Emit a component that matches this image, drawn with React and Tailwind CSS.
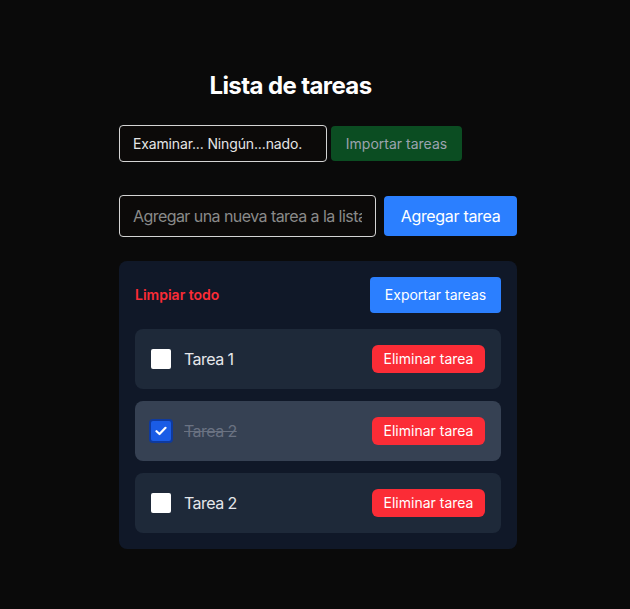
import { useState } from "react";

const tareasIniciales = [
  { id: 1, texto: "Tarea 1", hecha: false },
  { id: 2, texto: "Tarea 2", hecha: true },
  { id: 3, texto: "Tarea 2", hecha: false },
];

function Casilla({ marcada, onClick }) {
  if (marcada) {
    return (
      <button
        onClick={onClick}
        className="w-5 h-5 rounded-[2px] bg-[#1a5ce6] ring-2 ring-[#0f3a9e] flex items-center justify-center shrink-0"
      >
        <svg width="12" height="10" viewBox="0 0 12 10" fill="none">
          <path d="M1.5 5.2 L4.5 8 L10.5 1.8" stroke="white" strokeWidth="2.2" strokeLinecap="round" strokeLinejoin="round" />
        </svg>
      </button>
    );
  }
  return <button onClick={onClick} className="w-5 h-5 rounded-[2px] bg-white shrink-0" />;
}

export default function App() {
  const [tareas, setTareas] = useState(tareasIniciales);

  const toggle = (id) =>
    setTareas(tareas.map((t) => (t.id === id ? { ...t, hecha: !t.hecha } : t)));

  return (
    <div className="min-h-[609px] bg-[#0a0a0a] text-white font-['Inter',sans-serif] pt-[70px]">
      <div className="w-[398px] ml-[119px]">
        {/* Cabecera e importacion */}
        <div className="w-fit">
          <h1 className="text-2xl font-bold tracking-tight text-center text-white">Lista de tareas</h1>
          <div className="flex items-center gap-1 mt-[23px]">
            <div className="w-[208px] h-[37px] border border-[#d4d4d4] rounded bg-[#0c0a09] flex items-center px-[13px] text-sm tracking-[-0.01em] text-[#e5e5e5]">
              Examinar... Ningún...nado.
            </div>
            <button className="w-[131px] h-[35px] rounded bg-[#0b4d22] text-sm text-[#9ca3af]">
              Importar tareas
            </button>
          </div>
        </div>

        {/* Agregar tarea */}
        <div className="flex items-center gap-2 mt-[33px]">
          <input
            placeholder="Agregar una nueva tarea a la lista"
            className="w-[257px] h-[42px] border border-[#d4d4d4] rounded bg-[#0c0a09] px-[13px] text-base tracking-[-0.035em] placeholder:text-[#8a8a8a] outline-none"
          />
          <button className="w-[133px] h-10 rounded bg-[#2b7fff] text-base tracking-[-0.02em] text-white">Agregar tarea</button>
        </div>

        {/* Panel de tareas */}
        <div className="mt-6 bg-[#101828] rounded-lg p-4">
          <div className="flex items-center justify-between">
            <button className="text-sm font-semibold text-[#fb2c36]">Limpiar todo</button>
            <button className="w-[131px] h-9 rounded bg-[#2b7fff] text-sm text-white">Exportar tareas</button>
          </div>
          <ul className="mt-4 flex flex-col gap-3">
            {tareas.map((t) => (
              <li
                key={t.id}
                className={`h-[60px] rounded-lg px-4 flex items-center justify-between ${t.hecha ? "bg-[#364153]" : "bg-[#1e2939]"}`}
              >
                <div className="flex items-center gap-[13px]">
                  <Casilla marcada={t.hecha} onClick={() => toggle(t.id)} />
                  <span className={t.hecha ? "text-base tracking-[-0.035em] text-[#6a7282] line-through" : "text-base tracking-[-0.035em] text-[#e5e7eb]"}>
                    {t.texto}
                  </span>
                </div>
                <button className="w-[113px] h-7 rounded-md bg-[#fb2c36] text-sm text-white">Eliminar tarea</button>
              </li>
            ))}
          </ul>
        </div>
      </div>
    </div>
  );
}
